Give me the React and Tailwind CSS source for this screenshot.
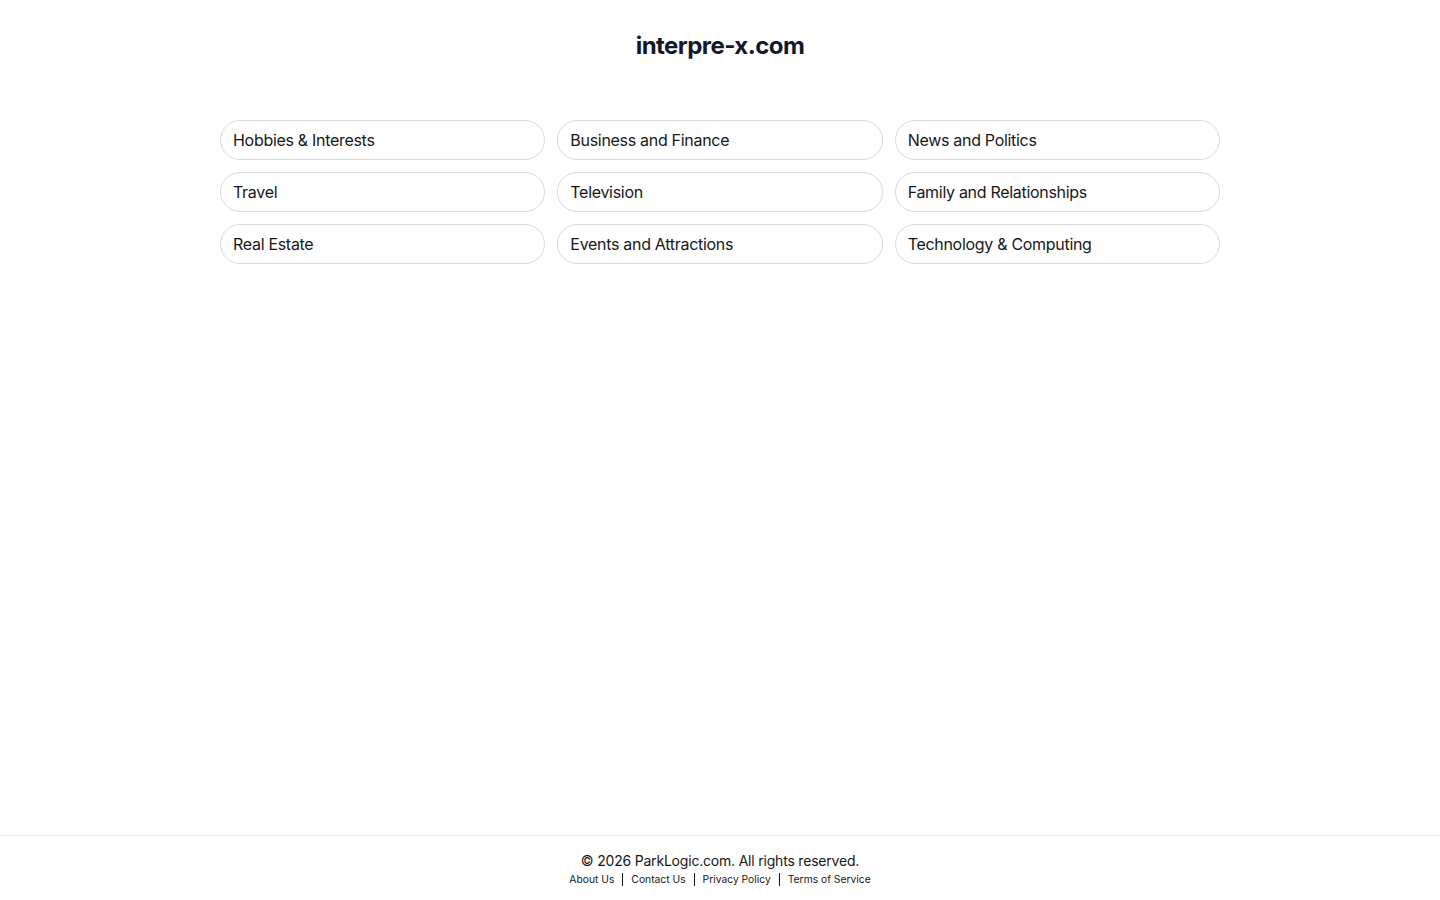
export default function App() {
  const categories = [
    'Hobbies & Interests',
    'Business and Finance',
    'News and Politics',
    'Travel',
    'Television',
    'Family and Relationships',
    'Real Estate',
    'Events and Attractions',
    'Technology & Computing',
  ];

  const links = ['About Us', 'Contact Us', 'Privacy Policy', 'Terms of Service'];

  return (
    <div className="min-h-screen flex flex-col bg-white text-gray-900" style={{ fontFamily: 'Inter, "Noto Sans", sans-serif' }}>
      <main className="flex-1">
        <h1 className="pt-[32px] text-center text-[24px] leading-[28px] font-bold tracking-[-0.55px] text-[#111827]">interpre-x.com</h1>
        <div className="mx-auto mt-[60px] w-[1000px] grid grid-cols-3 gap-3">
          {categories.map((c) => (
            <a
              key={c}
              href="#"
              className="h-10 flex items-center px-3 rounded-full border border-[#d9d9d9] text-[16px] tracking-[-0.3px] text-[#171717] hover:bg-gray-50"
            >
              {c}
            </a>
          ))}
        </div>
      </main>
      <footer className="border-t border-[#e5e7eb] h-[65px] flex flex-col items-center pt-[16px]">
        <p className="text-[14px] leading-[18px] tracking-[-0.2px] text-[#171717]">© 2026 ParkLogic.com. All rights reserved.</p>
        <div className="flex items-center text-[10.3px] leading-[18px] text-[#171717]">
          {links.map((l, i) => (
            <span key={l} className="flex items-center">
              {i > 0 && <span className="mx-[8px] w-px h-[13px] bg-[#171717]"></span>}
              <a href="#" className="hover:underline">{l}</a>
            </span>
          ))}
        </div>
      </footer>
    </div>
  );
}
